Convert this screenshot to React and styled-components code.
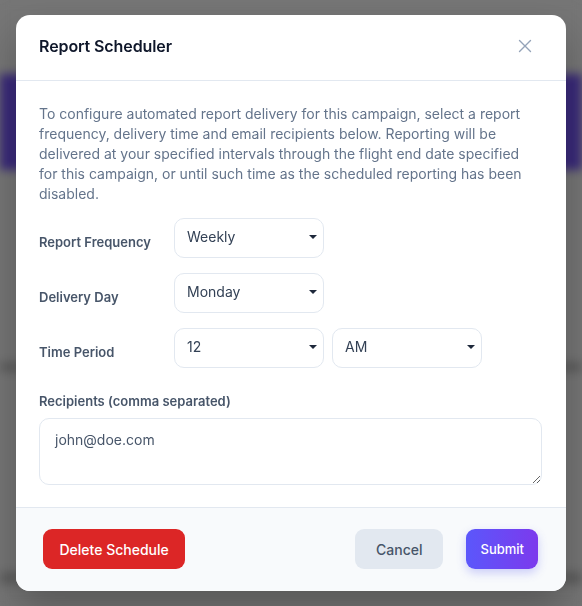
import React from "react";
import styled, { createGlobalStyle } from "styled-components";

const Global = createGlobalStyle`
  html, body { margin: 0; padding: 0; }
  body {
    width: 582px;
    height: 606px;
    overflow: hidden;
    font-family: Inter, "Noto Sans", Arial, sans-serif;
    background: #767676;
  }
  * { box-sizing: border-box; }
`;

const Backdrop = styled.div`
  height: 606px;
  display: flex;
  flex-direction: column;
  background: #767676;
  filter: blur(5px);
`;

const BackBand = styled.div`
  height: ${(p) => p.$h}px;
  background: ${(p) => p.$c || "#767676"};
`;

const Overlay = styled.div`
  position: fixed;
  inset: 0;
  display: flex;
  justify-content: center;
  align-items: flex-start;
  padding-top: 15px;
`;

const Modal = styled.div`
  width: 550px;
  background: #ffffff;
  border-radius: 14px;
  overflow: hidden;
  box-shadow: 0 20px 40px rgba(0, 0, 0, 0.25);
  display: flex;
  flex-direction: column;
`;

const Header = styled.div`
  height: 66px;
  padding: 0 24px 3px 23px;
  display: flex;
  align-items: center;
  justify-content: space-between;
  border-bottom: 1px solid #e2e8f0;
`;

const Title = styled.h2`
  margin: 0;
  font-size: 16px;
  font-weight: 600;
  color: #0f172a;
  letter-spacing: -0.1px;
`;

const CloseButton = styled.button`
  border: none;
  background: none;
  padding: 4px;
  margin-right: 6px;
  display: flex;
  color: #94a3b8;
  cursor: pointer;
`;

const Body = styled.div`
  padding: 23px 24px 22px 23px;
  display: flex;
  flex-direction: column;
`;

const Description = styled.p`
  margin: 0 0 14px;
  padding-right: 7px;
  font-size: 14px;
  line-height: 20px;
  color: #64748b;
`;

const FieldRow = styled.div`
  display: grid;
  grid-template-columns: 127px 150px 150px;
  column-gap: 8px;
  align-items: center;
  margin-bottom: 15px;
`;

const Label = styled.label`
  font-size: 13px;
  font-weight: 600;
  color: #475569;
  padding-top: 8px;
`;

const SelectBox = styled.div`
  height: 40px;
  border: 1px solid #e2e8f0;
  border-radius: 10px;
  background: #fff;
  display: flex;
  align-items: center;
  justify-content: space-between;
  padding: 0 6px 3px 12px;
  font-size: 14px;
  color: #334155;
`;

const Caret = styled.span`
  width: 0;
  height: 0;
  border-left: 4px solid transparent;
  border-right: 4px solid transparent;
  border-top: 4px solid #1e293b;
  margin-top: 1px;
`;

const RecipientsLabel = styled.label`
  display: block;
  font-size: 13px;
  font-weight: 600;
  color: #475569;
  margin: 10px 0 9px;
`;

const TextArea = styled.textarea`
  width: 100%;
  height: 67px;
  border: 1px solid #e2e8f0;
  border-radius: 10px;
  padding: 12px 15px;
  font-family: inherit;
  font-size: 14px;
  color: #475569;
  resize: vertical;
  outline: none;
  display: block;
`;

const Footer = styled.div`
  background: #f8fafc;
  border-top: 1px solid #e2e8f0;
  padding: 21px 28px 22px 27px;
  display: flex;
  align-items: center;
  gap: 23px;
`;

const Spacer = styled.div`
  flex: 1;
`;

const Button = styled.button`
  height: 40px;
  border: none;
  border-radius: 9px;
  font-family: inherit;
  font-size: ${(p) => (p.$small ? "13px" : "14px")};
  font-weight: 500;
  padding: 0 ${(p) => p.$px || 16}px;
  cursor: pointer;
  color: ${(p) => (p.$variant === "secondary" ? "#475569" : "#ffffff")};
  background: ${(p) =>
    p.$variant === "danger"
      ? "#dc2626"
      : p.$variant === "secondary"
      ? "#e2e8f0"
      : "linear-gradient(90deg, #5b57fb 0%, #7c3aed 100%)"};
  box-shadow: ${(p) =>
    p.$variant === "primary" ? "0 4px 10px rgba(99, 102, 241, 0.3)" : "none"};
`;

function Select({ value }) {
  return (
    <SelectBox>
      <span>{value}</span>
      <Caret />
    </SelectBox>
  );
}

export default function App() {
  return (
    <>
      <Global />
      <Backdrop>
        <BackBand $h={74} />
        <BackBand $h={96} $c="#3a2a7a" />
        <BackBand $h={192} />
        <BackBand $h={10} $c="#5e5e5e" />
        <BackBand $h={200} />
        <BackBand $h={12} $c="#5e5e5e" />
      </Backdrop>
      <Overlay>
        <Modal>
          <Header>
            <Title>Report Scheduler</Title>
            <CloseButton aria-label="Close">
              <svg width="14" height="14" viewBox="0 0 14 14" fill="none">
                <path d="M1.5 1.5 L12.5 12.5 M12.5 1.5 L1.5 12.5" stroke="currentColor" strokeWidth="1.4" strokeLinecap="round" />
              </svg>
            </CloseButton>
          </Header>
          <Body>
            <Description>
              To configure automated report delivery for this campaign, select a report
              frequency, delivery time and email recipients below. Reporting will be
              delivered at your specified intervals through the flight end date specified
              for this campaign, or until such time as the scheduled reporting has been
              disabled.
            </Description>
            <FieldRow>
              <Label>Report Frequency</Label>
              <Select value="Weekly" />
            </FieldRow>
            <FieldRow>
              <Label>Delivery Day</Label>
              <Select value="Monday" />
            </FieldRow>
            <FieldRow>
              <Label>Time Period</Label>
              <Select value="12" />
              <Select value="AM" />
            </FieldRow>
            <RecipientsLabel>Recipients (comma separated)</RecipientsLabel>
            <TextArea defaultValue="john@doe.com" />
          </Body>
          <Footer>
            <Button $variant="danger" $px={16.5}>Delete Schedule</Button>
            <Spacer />
            <Button $variant="secondary" $px={21}>Cancel</Button>
            <Button $variant="primary" $small $px={14}>Submit</Button>
          </Footer>
        </Modal>
      </Overlay>
    </>
  );
}
